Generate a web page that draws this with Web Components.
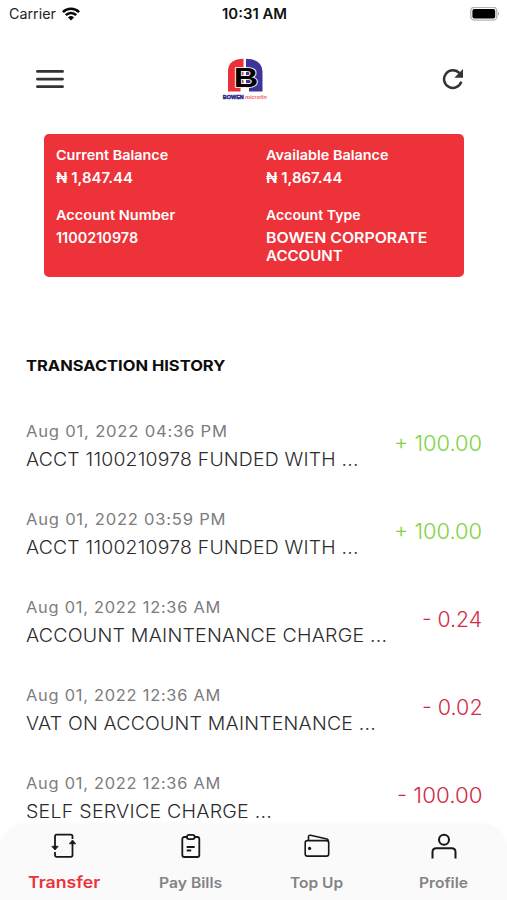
<!DOCTYPE html>
<html lang="en">
<head>
<meta charset="utf-8">
<title>Accounts</title>
<style>
html,body{margin:0;background:#fff}
body{font-family:Inter,"Liberation Sans",sans-serif;color:#2b2b2d;width:507px;height:900px;overflow:hidden}
</style>
</head>
<body>
<bank-app></bank-app>
<script>
// One line of text, stretched horizontally to the width in "w".
class FitText extends HTMLElement{
  connectedCallback(){
    const w=+this.getAttribute('w');
    this.attachShadow({mode:'open'}).innerHTML=`<style>
      :host{display:block;flex:none;width:${w}px;white-space:nowrap}
      span{display:inline-block;transform-origin:0 50%}
    </style><span><slot></slot></span>`;
    const s=this.shadowRoot.querySelector('span');
    const ls=parseFloat(getComputedStyle(this).letterSpacing)||0;
    s.style.transform=`scaleX(${w/(s.offsetWidth-ls)})`;
  }
}
customElements.define('fit-text',FitText);

class StatusBar extends HTMLElement{
  constructor(){super();this.attachShadow({mode:'open'}).innerHTML=`<style>
    :host{display:grid;grid-template-columns:1fr auto 1fr;align-items:center;height:28px;padding:0 7px 0 9px;font-size:14px;line-height:28px;color:#222}
    div{display:flex;align-items:center;gap:6px}
    .t{font-weight:600;color:#111}
    .b{justify-content:flex-end}
    svg{display:block}
  </style>
  <div><fit-text w="47">Carrier</fit-text>
    <svg width="18" height="14" viewBox="0 0 18 14" fill="none" stroke="#080808" stroke-width="2.6"><path d="M.9 5.1a11.5 11.5 0 0 1 16.2 0M3.8 8.2a7.4 7.4 0 0 1 10.4 0"/><path d="M6 10.4a4.3 4.3 0 0 1 6 0L9 13.5z" fill="#080808" stroke="none"/></svg></div>
  <div class="t"><fit-text w="65">10:31 AM</fit-text></div>
  <div class="b"><svg width="31" height="15" viewBox="0 0 31 15"><rect x="1.800" y=".3" width="26" height="12.8" rx="3.6" fill="#fff" stroke="#b5b5b5" stroke-width="1.4"/><rect x="3.400" y="1.900" width="22.8" height="9.6" rx="2" fill="#000"/><path d="M29 4.700q2.200 1.900 0 4z" fill="#aaa"/></svg></div>`}
}
customElements.define('status-bar',StatusBar);

class AppHeader extends HTMLElement{
  constructor(){super();this.attachShadow({mode:'open'}).innerHTML=`<style>
    :host{display:flex;justify-content:space-between;align-items:center;height:102px;padding:0 43px 0 36px;box-sizing:border-box}
    svg{display:block}
    .logo{margin-right:17px}
  </style>
  <svg width="28" height="20" viewBox="0 0 28 20" stroke="#343438" stroke-width="2.7" stroke-linecap="round"><path d="M1.4 2.4h25.2M1.4 10.1h25.2M1.4 17.7h25.2"/></svg>
  <svg class="logo" width="46" height="43" viewBox="0 0 46 43">
    <path d="M6 33.500V12Q7 1 21.500 .8V33.500z" fill="#ed2f38"/><path d="M24 .8Q39.500 1 40.500 13V33.500H24z" fill="#3d3698"/>
    <path d="M18.500 30h8.500v4h-8.500z" fill="#fff"/>
    <text x="11.800" y="28.800" font-family="'Liberation Sans',Arial,sans-serif" font-weight="700" font-size="28.500" textLength="24.500" lengthAdjust="spacingAndGlyphs" fill="#000" stroke="#fff" stroke-width="1.600" paint-order="stroke">B</text>
    <text x=".8" y="41.200" font-family="'Liberation Sans',Arial,sans-serif" font-weight="700" font-size="6" textLength="21" lengthAdjust="spacingAndGlyphs" fill="#302b8d" stroke="#302b8d" stroke-width=".5">BOWEN</text>
    <text x="23" y="41" font-family="'Liberation Sans',Arial,sans-serif" font-style="italic" font-weight="700" font-size="6" textLength="22" lengthAdjust="spacingAndGlyphs" fill="#f4636d">microfin</text>
  </svg>
  <svg width="22" height="22" viewBox="0 0 22 22"><path d="M17.500 5.300A8.800 8.800 0 1 0 19.300 13.600" fill="none" stroke="#343438" stroke-width="2.5"/><path d="M21 1v8.700h-8.700z" fill="#343438"/></svg>`}
}
customElements.define('app-header',AppHeader);

class BalanceCard extends HTMLElement{
  constructor(){super();this.attachShadow({mode:'open'}).innerHTML=`<style>
    :host{display:grid;grid-template-columns:210px 1fr;grid-template-rows:59.500px 1fr;margin:4px 43px 0 43.500px;height:143px;padding:11px 0 0 12.500px;box-sizing:border-box;border-radius:5px;background:#ed3239;color:#fff;font-weight:600;font-size:13.200px;line-height:20px}
    .v{font-size:14px;line-height:18px;margin-top:4.200px}
    .v+.v{margin-top:0}
  </style>
  <div><fit-text w="112.500">Current Balance</fit-text><fit-text class="v" w="77">₦ 1,847.44</fit-text></div>
  <div><fit-text w="122.500">Available Balance</fit-text><fit-text class="v" w="77">₦ 1,867.44</fit-text></div>
  <div><fit-text w="119">Account Number</fit-text><fit-text class="v" w="82.500">1100210978</fit-text></div>
  <div><fit-text w="95">Account Type</fit-text><fit-text class="v" w="162">BOWEN CORPORATE</fit-text><fit-text class="v" w="76.500">ACCOUNT</fit-text></div>`}
}
customElements.define('balance-card',BalanceCard);

class TransactionRow extends HTMLElement{
  connectedCallback(){
    const a=n=>this.getAttribute(n);
    this.attachShadow({mode:'open'}).innerHTML=`<style>
    :host{display:flex;justify-content:space-between;height:88px;flex:none}
    .d{font-size:15.200px;line-height:26px;letter-spacing:.7px;color:#7c7c7e;margin-top:1px}
    .t{font-size:18px;line-height:28px;letter-spacing:.2px;color:#2b2b2d;font-weight:350;margin-top:1px}
    .a{font-size:21px;line-height:30px;margin-top:11px;font-weight:350;color:${a('amount')[0]==='+'?'#7ed43f':'#d42a46'}}
    </style>
    <div><fit-text class="d" w="${a('dw')}">${a('date')}</fit-text><fit-text class="t" w="${a('tw')}">${a('label')}</fit-text></div>
    <fit-text class="a" w="${a('aw')}">${a('amount')}</fit-text>`}
}
customElements.define('transaction-row',TransactionRow);

class TransactionList extends HTMLElement{
  constructor(){super();this.attachShadow({mode:'open'}).innerHTML=`<style>
    :host{display:flex;flex-direction:column;flex:1;min-height:0;overflow:hidden;padding:74px 25px 0 25.500px}
    .h{font-size:14.800px;font-weight:700;line-height:30px;color:#0c0c0c;margin-bottom:37px}
  </style><fit-text class="h" w="199.500">TRANSACTION HISTORY</fit-text><slot></slot>`}
}
customElements.define('transaction-list',TransactionList);

class TabItem extends HTMLElement{
  connectedCallback(){
    const on=this.hasAttribute('active');
    this.attachShadow({mode:'open'}).innerHTML=`<style>
    :host{display:flex;flex-direction:column;align-items:center;font-weight:600;line-height:22px;font-size:${on?16:14.2}px;color:${on?'#ed3239':'#838385'}}
    .i{height:28px;margin:8px 0 ${on?11:12}px}
    </style><div class="i"><slot></slot></div><fit-text w="${this.getAttribute('w')}">${this.getAttribute('label')}</fit-text>`}
}
customElements.define('tab-item',TabItem);

class TabBar extends HTMLElement{
  constructor(){super();this.attachShadow({mode:'open'}).innerHTML=`<style>
    :host{display:grid;grid-template-columns:repeat(4,126.700px);flex:none;height:76px;padding-left:.3px;box-sizing:border-box;background:#fafafa;border-radius:26px 26px 0 0;box-shadow:0 0 4px rgba(0,0,0,.04)}
    svg{display:block;fill:none;stroke:#171719;stroke-width:1.8;stroke-linejoin:round}
  </style>
  <tab-item active label="Transfer" w="72"><svg width="28" height="28"><path d="M5 10V4.500Q5 2.700 6.700 2.700H20.800Q22.500 2.700 22.500 4.500V7M22.500 11V23Q22.500 24.800 20.800 24.800H6.700Q5 24.800 5 23V20M5 10V17"/><path d="M1.800 14.300h6.400L5 18zM19.300 11.800h6.400L22.500 8z" fill="#171719" stroke-width=".8"/></svg></tab-item>
  <tab-item label="Pay Bills" w="63"><svg width="28" height="28" viewBox="-.7 0 28 28"><rect x="5.600" y="5" width="17" height="20" rx="2"/><rect x="10.200" y="2.900" width="7.800" height="4.200" rx="2" fill="#fafafa"/><path d="M10 15h8M10 18.500h4.500"/></svg></tab-item>
  <tab-item label="Top Up" w="53.500"><svg width="28" height="28" style="stroke-width:1.600"><rect x="2.200" y="8.600" width="23.500" height="15.500" rx="2.200"/><path d="M5.500 8.500V5Q5.500 2.900 7.600 3.300L24 7Q25.500 7.500 25.500 10"/><circle cx="6.600" cy="16.400" r="1.600" fill="#171719" stroke="none"/></svg></tab-item>
  <tab-item label="Profile" w="49.500"><svg width="28" height="28" style="stroke-width:2"><circle cx="14" cy="7.800" r="5"/><path d="M2.500 26.500V20Q2.500 16.200 6.300 16.200H21.700Q25.500 16.200 25.500 20V26.500"/></svg></tab-item>`}
}
customElements.define('tab-bar',TabBar);

class BankApp extends HTMLElement{
  constructor(){super();this.attachShadow({mode:'open'}).innerHTML=`<style>
    :host{display:flex;flex-direction:column;width:507px;height:900px;background:#fff;overflow:hidden}
  </style>
  <status-bar></status-bar><app-header></app-header><balance-card></balance-card>
  <transaction-list>
    <transaction-row date="Aug 01, 2022 04:36 PM" dw="201" label="ACCT 1100210978 FUNDED WITH ..." tw="332.500" amount="+ 100.00" aw="88.500"></transaction-row>
    <transaction-row date="Aug 01, 2022 03:59 PM" dw="199" label="ACCT 1100210978 FUNDED WITH ..." tw="332.500" amount="+ 100.00" aw="88.500"></transaction-row>
    <transaction-row date="Aug 01, 2022 12:36 AM" dw="194.500" label="ACCOUNT MAINTENANCE CHARGE ..." tw="360.500" amount="- 0.24" aw="60.500"></transaction-row>
    <transaction-row date="Aug 01, 2022 12:36 AM" dw="194.500" label="VAT ON ACCOUNT MAINTENANCE ..." tw="350" amount="- 0.02" aw="60.500"></transaction-row>
    <transaction-row date="Aug 01, 2022 12:36 AM" dw="194.500" label="SELF SERVICE CHARGE ..." tw="246" amount="- 100.00" aw="85"></transaction-row>
  </transaction-list>
  <tab-bar></tab-bar>`}
}
customElements.define('bank-app',BankApp);
</script>
</body>
</html>
